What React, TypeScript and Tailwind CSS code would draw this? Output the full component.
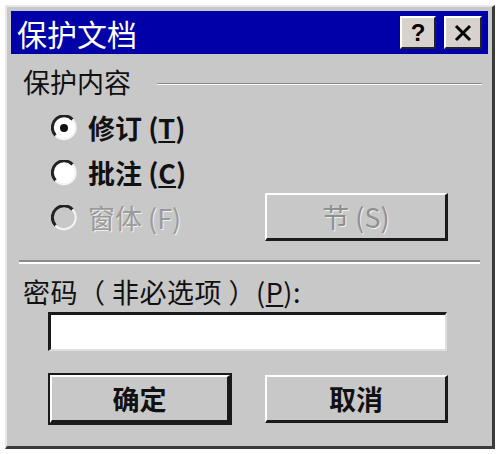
import React from "react";

const font = { fontFamily: '"Noto Sans CJK SC", "Noto Sans", sans-serif' };

const Radio = ({ checked, disabled }: { checked?: boolean; disabled?: boolean }) => (
  <svg width="26" height="26" viewBox="0 0 26 26" className="shrink-0">
    <circle cx="13" cy="13" r="11" fill={disabled ? "#c8c8c8" : "#ffffff"} />
    <path d="M4.5 20.5 A11 11 0 0 1 21.5 4.5" fill="none" stroke="#222" strokeWidth="3" />
    <path d="M21.5 4.5 A11 11 0 0 1 4.5 20.5" fill="none" stroke="#f4f4f4" strokeWidth="2" />
    {checked && <circle cx="13" cy="13" r="4" fill="#111" />}
  </svg>
);

const Button = ({ label, isDefault, disabled }: { label: string; isDefault?: boolean; disabled?: boolean }) => (
  <div
    className={`flex items-center justify-center bg-[#c8c8c8] border-t-2 border-l-2 border-t-white border-l-white border-r-[3px] border-b-[3px] border-r-[#1a1a1a] border-b-[#1a1a1a] ${
      isDefault ? "outline-2 outline-[#1a1a1a]" : ""
    }`}
    style={{ width: isDefault ? 180 : 183, height: 48 }}
  >
    <span
      className={`text-[27px] leading-none ${
        disabled ? "text-[#8f8f8f] font-normal [text-shadow:1px_1px_0_#f0f0f0]" : "text-[#111] font-bold"
      }`}
      style={font}
    >
      {label}
    </span>
  </div>
);

export default function App() {
  return (
    <div className="w-[500px] h-[454px] bg-white pt-[5px] pl-[5px]">
      <div className="w-[490px] h-[444px] bg-[#c8c8c8] border-l-2 border-t-2 border-l-[#e8e8e8] border-t-[#e8e8e8] border-r-[3px] border-b-[3px] border-r-[#3a3a3a] border-b-[#3a3a3a] p-[4px] flex flex-col">
        {/* title bar */}
        <div className="h-[43px] bg-[#0000a8] flex items-center pl-[6px] pr-[6px]">
          <span className="text-white text-[30px] leading-none flex-1" style={font}>
            保护文档
          </span>
          <div className="w-[36px] h-[33px] bg-[#d8d2ce] border-t-2 border-l-2 border-t-white border-l-white border-r-2 border-b-2 border-r-[#222] border-b-[#222] flex items-center justify-center">
            <span className="text-[24px] font-bold leading-none text-black" style={{ fontFamily: '"Liberation Sans", sans-serif' }}>?</span>
          </div>
          <div className="w-[38px] h-[33px] ml-[8px] bg-[#d8d2ce] border-t-2 border-l-2 border-t-white border-l-white border-r-2 border-b-2 border-r-[#222] border-b-[#222] flex items-center justify-center">
            <svg width="20" height="18" viewBox="0 0 20 18">
              <path d="M3 2 L17 16 M17 2 L3 16" stroke="#000" strokeWidth="3" />
            </svg>
          </div>
        </div>

        {/* protect content group */}
        <div className="flex items-center mt-[14px] pl-[12px] pr-[6px]">
          <span className="text-[27px] leading-none text-[#111]" style={font}>保护内容</span>
          <div className="flex-1 ml-[26px] mt-[4px] border-t border-t-[#8a8a8a] border-b border-b-white" />
        </div>

        <div className="flex mt-[19px]">
          <div className="flex flex-col gap-[18px] pl-[40px]">
            <div className="flex items-center gap-[11px]">
              <Radio checked />
              <span className="text-[27px] leading-none text-[#111] font-bold" style={font}>修订 (<span className="underline">T</span>)</span>
            </div>
            <div className="flex items-center gap-[11px]">
              <Radio />
              <span className="text-[27px] leading-none text-[#111] font-bold" style={font}>批注 (<span className="underline">C</span>)</span>
            </div>
            <div className="flex items-center gap-[11px]">
              <Radio disabled />
              <span className="text-[27px] leading-none text-[#9a9a9a] [text-shadow:1px_1px_0_#f0f0f0]" style={font}>窗体 (F)</span>
            </div>
          </div>
          <div className="ml-auto mr-[40px] mt-[79px]">
            <Button label="节 (S)" disabled />
          </div>
        </div>

        <div className="mt-[19px] mx-[8px] border-t-2 border-t-[#8a8a8a] border-b-2 border-b-white" />

        <div className="mt-[14px] pl-[12px]">
          <span className="text-[27px] leading-none text-[#111] tracking-[0.5px]" style={font}>
            密码（ 非必选项 ）(<span className="underline">P</span>):
          </span>
        </div>

        <div className="ml-[37px] mt-[3px] w-[399px] h-[39px] bg-white border-t-[3px] border-l-[3px] border-t-[#1a1a1a] border-l-[#1a1a1a] border-b-2 border-r-2 border-b-[#e0e0e0] border-r-[#e0e0e0]" />

        <div className="flex mt-[24px] pl-[39px] gap-[35px]">
          <Button label="确定" isDefault />
          <Button label="取消" />
        </div>
      </div>
    </div>
  );
}
